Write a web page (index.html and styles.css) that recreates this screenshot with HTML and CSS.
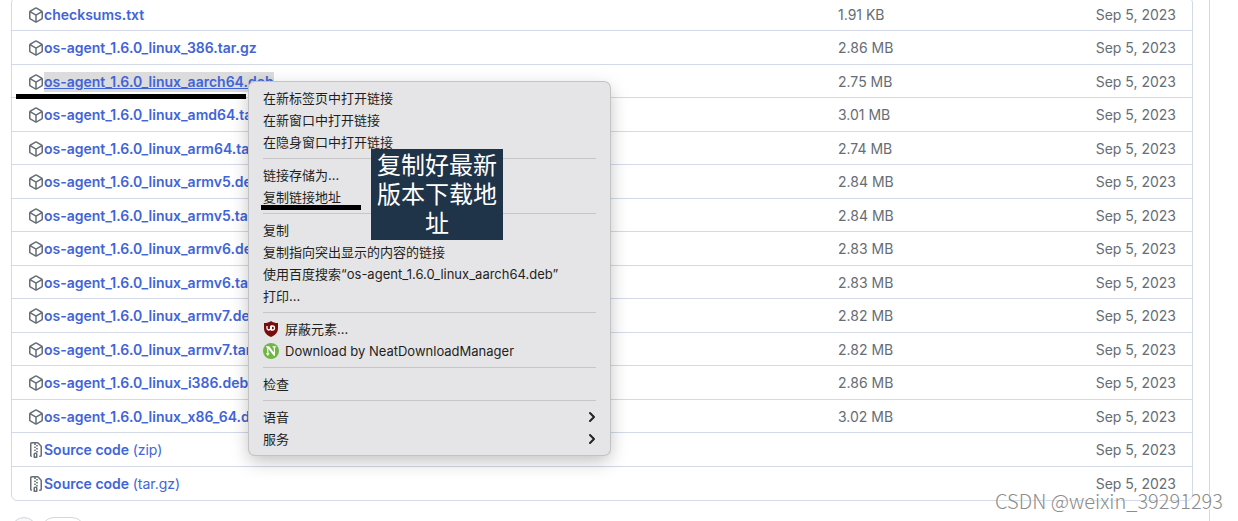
FILE: index.html
```html
<!DOCTYPE html>
<html lang="zh-CN">
<head>
	<meta charset="utf-8">
	<title>os-agent 1.6.0</title>
	<link rel="stylesheet" href="styles.css">
</head>
<body>
	<svg class="sprite" aria-hidden="true">
		<symbol id="package" viewBox="0 0 16 16">
			<path d="m8.878.392 5.25 3.045c.54.314.872.89.872 1.514v6.098a1.75 1.75 0 0 1-.872 1.514l-5.25 3.045a1.75 1.75 0 0 1-1.756 0l-5.25-3.045A1.75 1.75 0 0 1 1 11.049V4.951c0-.624.332-1.201.872-1.514L7.122.392a1.75 1.75 0 0 1 1.756 0ZM7.875 1.69l-4.63 2.685L8 7.133l4.755-2.758-4.63-2.685a.248.248 0 0 0-.25 0ZM2.5 5.677v5.372c0 .09.047.171.125.216l4.625 2.683V8.432Zm6.25 8.271 4.625-2.683a.25.25 0 0 0 .125-.216V5.677L8.75 8.432Z"/>
		</symbol>
		<symbol id="zip" viewBox="0 0 16 16">
			<path d="M3.5 1.75v11.5c0 .09.048.173.126.217a.75.75 0 0 1-.752 1.298A1.748 1.748 0 0 1 2 13.25V1.75C2 .784 2.784 0 3.75 0h5.586c.464 0 .909.185 1.237.513l2.914 2.914c.329.328.513.773.513 1.237v8.586A1.75 1.75 0 0 1 12.25 15h-.5a.75.75 0 0 1 0-1.5h.5a.25.25 0 0 0 .25-.25V4.664a.25.25 0 0 0-.073-.177L9.513 1.573a.25.25 0 0 0-.177-.073H7.25a.75.75 0 0 1 0 1.5h-.5a.75.75 0 0 1 0-1.5h-3a.25.25 0 0 0-.25.25Zm3.75 8.75h.5c.966 0 1.75.784 1.75 1.75v3a.75.75 0 0 1-.75.75h-2.5a.75.75 0 0 1-.75-.75v-3c0-.966.784-1.75 1.75-1.75ZM6 5.25a.75.75 0 0 1 .75-.75h.5a.75.75 0 0 1 0 1.5h-.5A.75.75 0 0 1 6 5.25Zm.75 2.25h.5a.75.75 0 0 1 0 1.5h-.5a.75.75 0 0 1 0-1.5ZM8 6.75A.75.75 0 0 1 8.75 6h.5a.75.75 0 0 1 0 1.5h-.5A.75.75 0 0 1 8 6.75ZM8.75 3h.5a.75.75 0 0 1 0 1.5h-.5a.75.75 0 0 1 0-1.5ZM8 9.75A.75.75 0 0 1 8.75 9h.5a.75.75 0 0 1 0 1.5h-.5A.75.75 0 0 1 8 9.75Zm-1 2.5v2.25h1v-2.25a.25.25 0 0 0-.25-.25h-.5a.25.25 0 0 0-.25.25Z"/>
		</symbol>
		<symbol id="arrow" viewBox="0 0 8 12">
			<path d="M2 2l4 4-4 4" fill="none" stroke="#222" stroke-width="2" stroke-linecap="round" stroke-linejoin="round"/>
		</symbol>
	</svg>

	<div class="release">
		<table class="assets">
			<tr>
				<td class="name"><div class="file"><svg class="icon"><use href="#package"/></svg><a href="#">checksums.txt</a></div></td>
				<td class="size">1.91 KB</td>
				<td class="date">Sep 5, 2023</td>
			</tr>
			<tr>
				<td class="name"><div class="file"><svg class="icon"><use href="#package"/></svg><a href="#">os-agent_1.6.0_linux_386.tar.gz</a></div></td>
				<td class="size">2.86 MB</td>
				<td class="date">Sep 5, 2023</td>
			</tr>
			<tr>
				<td class="name"><div class="file"><svg class="icon"><use href="#package"/></svg><a class="selected" href="#">os-agent_1.6.0_linux_aarch64.deb</a></div></td>
				<td class="size">2.75 MB</td>
				<td class="date">Sep 5, 2023</td>
			</tr>
			<tr>
				<td class="name"><div class="file"><svg class="icon"><use href="#package"/></svg><a href="#">os-agent_1.6.0_linux_amd64.tar.gz</a></div></td>
				<td class="size">3.01 MB</td>
				<td class="date">Sep 5, 2023</td>
			</tr>
			<tr>
				<td class="name"><div class="file"><svg class="icon"><use href="#package"/></svg><a href="#">os-agent_1.6.0_linux_arm64.tar.gz</a></div></td>
				<td class="size">2.74 MB</td>
				<td class="date">Sep 5, 2023</td>
			</tr>
			<tr>
				<td class="name"><div class="file"><svg class="icon"><use href="#package"/></svg><a href="#">os-agent_1.6.0_linux_armv5.deb</a></div></td>
				<td class="size">2.84 MB</td>
				<td class="date">Sep 5, 2023</td>
			</tr>
			<tr>
				<td class="name"><div class="file"><svg class="icon"><use href="#package"/></svg><a href="#">os-agent_1.6.0_linux_armv5.tar.gz</a></div></td>
				<td class="size">2.84 MB</td>
				<td class="date">Sep 5, 2023</td>
			</tr>
			<tr>
				<td class="name"><div class="file"><svg class="icon"><use href="#package"/></svg><a href="#">os-agent_1.6.0_linux_armv6.deb</a></div></td>
				<td class="size">2.83 MB</td>
				<td class="date">Sep 5, 2023</td>
			</tr>
			<tr>
				<td class="name"><div class="file"><svg class="icon"><use href="#package"/></svg><a href="#">os-agent_1.6.0_linux_armv6.tar.gz</a></div></td>
				<td class="size">2.83 MB</td>
				<td class="date">Sep 5, 2023</td>
			</tr>
			<tr>
				<td class="name"><div class="file"><svg class="icon"><use href="#package"/></svg><a href="#">os-agent_1.6.0_linux_armv7.deb</a></div></td>
				<td class="size">2.82 MB</td>
				<td class="date">Sep 5, 2023</td>
			</tr>
			<tr>
				<td class="name"><div class="file"><svg class="icon"><use href="#package"/></svg><a href="#">os-agent_1.6.0_linux_armv7.tar.gz</a></div></td>
				<td class="size">2.82 MB</td>
				<td class="date">Sep 5, 2023</td>
			</tr>
			<tr>
				<td class="name"><div class="file"><svg class="icon"><use href="#package"/></svg><a href="#">os-agent_1.6.0_linux_i386.deb</a></div></td>
				<td class="size">2.86 MB</td>
				<td class="date">Sep 5, 2023</td>
			</tr>
			<tr>
				<td class="name"><div class="file"><svg class="icon"><use href="#package"/></svg><a href="#">os-agent_1.6.0_linux_x86_64.deb</a></div></td>
				<td class="size">3.02 MB</td>
				<td class="date">Sep 5, 2023</td>
			</tr>
			<tr>
				<td class="name"><div class="file"><svg class="icon"><use href="#zip"/></svg><a href="#">Source code <span class="ext">(zip)</span></a></div></td>
				<td class="size"></td>
				<td class="date">Sep 5, 2023</td>
			</tr>
			<tr>
				<td class="name"><div class="file"><svg class="icon"><use href="#zip"/></svg><a href="#">Source code <span class="ext">(tar.gz)</span></a></div></td>
				<td class="size"></td>
				<td class="date">Sep 5, 2023</td>
			</tr>
		</table>
		<div class="reactions">
			<button class="reaction add" aria-label="Add reaction"></button>
			<button class="reaction" aria-label="Reactions"></button>
		</div>
	</div>

	<div class="mark mark-file"></div>

	<div class="menu">
		<button class="item">在新标签页中打开链接</button>
		<button class="item">在新窗口中打开链接</button>
		<button class="item">在隐身窗口中打开链接</button>
		<hr>
		<button class="item">链接存储为...</button>
		<button class="item">复制链接地址</button>
		<hr>
		<button class="item">复制</button>
		<button class="item">复制指向突出显示的内容的链接</button>
		<button class="item">使用百度搜索“os-agent_1.6.0_linux_aarch64.deb”</button>
		<button class="item">打印...</button>
		<hr>
		<button class="item">
			<svg class="ext-icon" viewBox="0 0 16 16">
				<path d="M8 0c2 1.500 4 2 7 2v5c0 4.500-2.500 7-7 9-4.500-2-7-4.500-7-9V2c3 0 5-.5 7-2z" fill="#780c0c"/>
				<path d="M4 5v2.200a1.800 1.800 0 0 0 3.600 0V5M8.300 5v4h1.200a2 2 0 0 0 0-4z" fill="none" stroke="#fff" stroke-width="1.300"/>
			</svg>
			屏蔽元素...
		</button>
		<button class="item">
			<svg class="ext-icon" viewBox="0 0 16 16">
				<circle cx="8" cy="8" r="8" fill="#6fb745"/>
				<path d="M3 3.300h3.200l4.600 6.200V4.600l-1.300-.4v-.9H13v.9l-1 .4v8.200h-1.200L5.400 5.700v4.500h1.300L4.800 13 2.900 10.200h1.300V4.500L3 4.200z" fill="#fff"/>
			</svg>
			Download by NeatDownloadManager
		</button>
		<hr>
		<button class="item">检查</button>
		<hr>
		<button class="item">语音<svg class="arrow"><use href="#arrow"/></svg></button>
		<button class="item">服务<svg class="arrow"><use href="#arrow"/></svg></button>
	</div>

	<div class="mark mark-copy"></div>
	<div class="note">复制好最新版本下载地址</div>
	<div class="watermark">CSDN @weixin_39291293</div>
</body>
</html>
```

FILE: styles.css
```css
* {
	box-sizing: border-box;
}

body {
	position: relative;
	height: 100vh;
	margin: 0;
	overflow: hidden;
	background-color: #fff;
	font-family: Inter, "Noto Sans CJK SC", sans-serif;
	font-size: 14px;
	color: #656d76;
}

button {
	font: inherit;
	color: inherit;
}

.sprite {
	position: absolute;
	width: 0;
	height: 0;
}

/* release box, scrolled to its asset list */
.release {
	margin-top: -3px;
	margin-right: 28px;
	padding: 0 16px 0 11px;
	border-right: 1px solid #d3d9e2;
}

.assets {
	width: 100%;
	border: 1px solid #d3d9e6;
	border-radius: 6px;
	border-spacing: 0;
	table-layout: fixed;
}

.assets td {
	height: 33px;
	padding: 2px 0 0;
	border-bottom: 1px solid #d3d9e6;
	line-height: 20px;
}

.assets tr:nth-child(even) td {
	height: 34px;
	padding-top: 0;
}

.assets tr:last-child td {
	padding-top: 0;
	border-bottom: 0;
}

.assets .name {
	width: 70%;
	padding-left: 16px;
}

.assets .date {
	padding-right: 16px;
	text-align: right;
}

.file {
	display: flex;
	align-items: center;
}

.file a {
	color: #4164d8;
	font-weight: 600;
	text-decoration: none;
}

.file a.selected {
	background-color: #dcdcdc;
	text-decoration: underline;
}

.file .ext {
	font-weight: 400;
}

.icon {
	width: 16px;
	height: 16px;
	fill: #656d76;
}

.reactions {
	display: flex;
	gap: 4px;
	padding-top: 16px;
}

.reaction {
	width: 44px;
	height: 26px;
	padding: 0;
	border: 1px solid #d0d7de;
	border-radius: 13px;
	background-color: #fff;
}

.reaction.add {
	width: 26px;
	background-color: #f6f8fa;
}

/* context menu */
.menu {
	position: absolute;
	top: 82px;
	left: 249px;
	width: 361px;
	padding: 5px 14px;
	border-radius: 6px;
	background-color: #e5e5e7;
	box-shadow: 0 0 0 1px #c3c3c6, 0 6px 18px rgba(0, 0, 0, .25);
	color: #1f1f21;
	font-size: 13px;
}

.item {
	display: flex;
	align-items: center;
	gap: 6px;
	width: 100%;
	height: 22px;
	padding: 0;
	border: 0;
	background: none;
	line-height: 22px;
	text-align: left;
	white-space: nowrap;
}

.menu hr {
	height: 1px;
	margin: 5px 0;
	border: 0;
	background-color: #c6c6c9;
}

.ext-icon {
	width: 16px;
	height: 16px;
}

.arrow {
	width: 8px;
	height: 12px;
	margin-left: auto;
}

/* annotations */
.mark {
	position: absolute;
	height: 5px;
	background-color: #000;
}

.mark-file {
	top: 94px;
	left: 16px;
	width: 230px;
}

.mark-copy {
	top: 205px;
	left: 261px;
	width: 100px;
}

.note {
	position: absolute;
	top: 149px;
	left: 371px;
	width: 132px;
	padding: 0 6px 4px;
	background-color: #1f3448;
	color: #fff;
	font-family: "Noto Sans CJK SC", sans-serif;
	font-size: 24px;
	line-height: 29px;
	text-align: center;
}

.watermark {
	position: absolute;
	right: 15px;
	bottom: 6px;
	color: #8c8c8c;
	font-family: "Noto Sans CJK SC", sans-serif;
	font-size: 20px;
	font-weight: 300;
	line-height: 28px;
	text-shadow: 1px 1px 0 #fff;
}
```
